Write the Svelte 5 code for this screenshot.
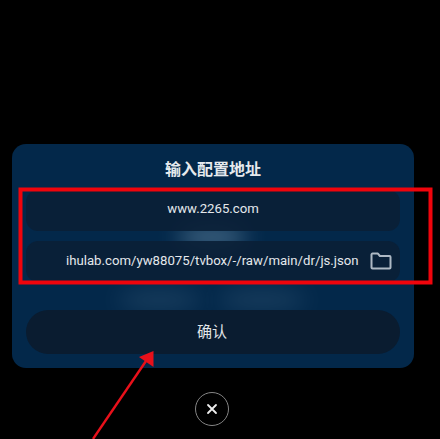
<script>
  let title = '输入配置地址';
  let host = 'www.2265.com';
  let url = 'ihulab.com/yw88075/tvbox/-/raw/main/dr/js.json';
</script>

<main class="page">
  <section class="dialog">
    <div class="glow glow--mid"></div>
    <div class="glow glow--left"></div>
    <div class="glow glow--right"></div>

    <h2>{title}</h2>

    <div class="field field--first">{host}</div>
    <div class="field field--url">
      <span class="url">{url}</span>
      <svg class="folder" width="22" height="18" viewBox="0 0 22 18" fill="none" aria-hidden="true">
        <path d="M1.5 15.5V2.6a1 1 0 0 1 1-1h5.4l2 2.4h9.6a1 1 0 0 1 1 1v10.5a1 1 0 0 1-1 1h-17a1 1 0 0 1-1-1z" stroke="#aeb9c4" stroke-width="2" stroke-linejoin="round"/>
      </svg>
    </div>

    <button class="confirm">确认</button>
  </section>

  <button class="close" aria-label="关闭">
    <svg width="12" height="12" viewBox="0 0 12 12" aria-hidden="true">
      <path d="M2 2l8 8M10 2l-8 8" stroke="#eeeeee" stroke-width="1.8" stroke-linecap="round"/>
    </svg>
  </button>

  <!-- annotation drawn over the screenshot -->
  <svg class="markup" width="440" height="439" viewBox="0 0 440 439" fill="none" aria-hidden="true">
    <rect x="20.5" y="189.5" width="410" height="93" stroke="#f0040c" stroke-width="4"/>
    <path d="M93 439L146 361" stroke="#e8101a" stroke-width="2.4"/>
    <path d="M153.5 351L153.5 367L139 357z" fill="#e8101a"/>
  </svg>
</main>

<style>
  :global(body) {
    margin: 0;
    background: #000;
  }

  .page {
    position: relative;
    width: 440px;
    height: 439px;
    overflow: hidden;
    box-sizing: border-box;
    padding: 144px 26px 0 12px;
    background: #000;
    font-family: "Roboto", "Noto Sans CJK SC", sans-serif;
    color: #e4e8ec;
  }

  .dialog {
    position: relative;
    overflow: hidden;
    box-sizing: border-box;
    height: 224px;
    padding: 15px 14px 0 14px;
    border-radius: 14px;
    background: #03284a;
  }

  h2 {
    position: relative;
    margin: 0 0 9px;
    height: 22px;
    font-size: 16px;
    font-weight: 600;
    line-height: 22px;
    text-align: center;
    color: #e6eaee;
  }

  .glow {
    position: absolute;
    border-radius: 50%;
    background: #4f7390;
    filter: blur(11px);
  }

  .glow--mid {
    left: 165px;
    top: 80px;
    width: 70px;
    height: 26px;
    opacity: .75;
  }

  .glow--left {
    left: 105px;
    top: 146px;
    width: 85px;
    height: 20px;
    opacity: .3;
  }

  .glow--right {
    left: 205px;
    top: 146px;
    width: 90px;
    height: 20px;
    opacity: .3;
  }

  .field {
    position: relative;
    display: flex;
    align-items: center;
    justify-content: center;
    box-sizing: border-box;
    height: 41px;
    border-radius: 12px;
    background: rgba(10, 31, 54, .9);
    font-size: 13.2px;
  }

  .field--first {
    height: 41px;
    margin-bottom: 10px;
    padding-bottom: 4px;
  }

  .field--url {
    justify-content: flex-start;
    height: 41px;
    padding: 0 8px 2px 40px;
  }

  .url {
    white-space: nowrap;
  }

  .folder {
    flex: none;
    margin-left: 11px;
  }

  .confirm {
    position: relative;
    display: block;
    width: 100%;
    height: 44px;
    margin-top: 28px;
    padding: 0 2px 3px 0;
    border: 0;
    border-radius: 22px;
    background: #0a1c30;
    color: #e2e6ea;
    font: inherit;
    font-size: 15px;
  }

  .close {
    display: flex;
    align-items: center;
    justify-content: center;
    box-sizing: border-box;
    width: 34px;
    height: 34px;
    margin: 24px 0 0 183px;
    padding: 0;
    border: 1.5px solid #858585;
    border-radius: 50%;
    background: transparent;
  }

  .markup {
    position: absolute;
    left: 0;
    top: 0;
    pointer-events: none;
  }
</style>
